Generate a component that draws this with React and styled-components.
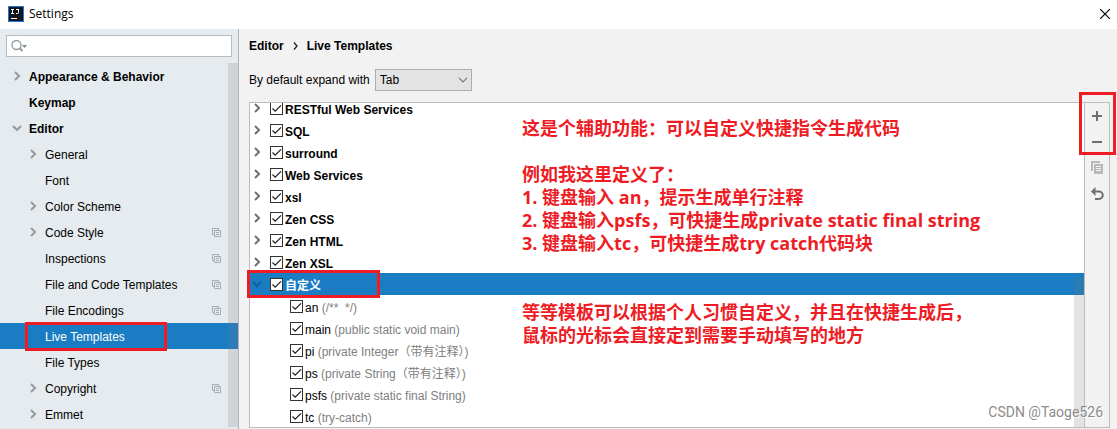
import React, { useState } from 'react';
import styled, { createGlobalStyle } from 'styled-components';

const settingsTree = [
  { name: 'Appearance & Behavior', depth: 0, arrow: 'closed' },
  { name: 'Keymap', depth: 0 },
  { name: 'Editor', depth: 0, arrow: 'open' },
  { name: 'General', depth: 1, arrow: 'closed' },
  { name: 'Font', depth: 1 },
  { name: 'Color Scheme', depth: 1, arrow: 'closed' },
  { name: 'Code Style', depth: 1, arrow: 'closed', perProject: true },
  { name: 'Inspections', depth: 1, perProject: true },
  { name: 'File and Code Templates', depth: 1, perProject: true },
  { name: 'File Encodings', depth: 1, perProject: true },
  { name: 'Live Templates', depth: 1, marked: true },
  { name: 'File Types', depth: 1 },
  { name: 'Copyright', depth: 1, arrow: 'closed', perProject: true },
  { name: 'Emmet', depth: 1, arrow: 'closed' },
];

const templateRows = [
  { name: 'RESTful Web Services', group: true },
  { name: 'SQL', group: true },
  { name: 'surround', group: true },
  { name: 'Web Services', group: true },
  { name: 'xsl', group: true },
  { name: 'Zen CSS', group: true },
  { name: 'Zen HTML', group: true },
  { name: 'Zen XSL', group: true },
  { name: '自定义', group: true, open: true },
  { name: 'an', description: '(/**  */)' },
  { name: 'main', description: '(public static void main)' },
  { name: 'pi', description: '(private Integer（带有注释）)' },
  { name: 'ps', description: '(private String（带有注释）)' },
  { name: 'psfs', description: '(private static final String)' },
  { name: 'tc', description: '(try-catch)' },
];

function Arrow({ open, color }) {
  return (
    <svg width='10' height='10' viewBox='0 0 10 10' fill='none' stroke={color} strokeWidth='2'>
      <path d={open ? 'M1 3l4 4 4-4' : 'M3 1l4 4-4 4'} />
    </svg>
  );
}

function LogoIcon() {
  return (
    <svg width='16' height='16' viewBox='0 0 16 16' aria-hidden='true'>
      <rect width='16' height='16' fill='#1a78e0' />
      <rect x='1' y='1' width='14' height='14' fill='#10151c' />
      <g stroke='#fff' fill='none'>
        <path d='M3 3.500h3M4.500 3v5M3 7.500h3M8 3.500h3M10.500 3v3.500q0 1-1 1H8' />
        <path d='M3 12.500h6' />
      </g>
    </svg>
  );
}

function SearchIcon() {
  return (
    <svg width='18' height='14' viewBox='0 0 18 14' fill='none' aria-hidden='true'>
      <circle cx='5.500' cy='6' r='4.500' stroke='#919ba2' strokeWidth='1.300' />
      <path d='M8.500 9l3 3' stroke='#919ba2' strokeWidth='2' />
      <path d='M11 6h5l-2.500 3z' fill='#7f898f' />
    </svg>
  );
}

function ProjectIcon() {
  return (
    <svg width='9' height='9' viewBox='0 0 9 9' fill='none' stroke='#a3adb5' aria-hidden='true'>
      <path d='M2 6.500H.5v-6h6V2' />
      <path d='M2.500 2.500h6v6h-6zM4 4.500h3M4 6.500h3' />
    </svg>
  );
}

function Checkbox({ id, checked, onChange }) {
  return (
    <CheckWrap>
      <CheckInput id={id} type='checkbox' checked={checked} onChange={onChange} />
      {checked && (
        <CheckMark viewBox='0 0 13 13' fill='none' stroke='#222' strokeWidth='1.300'>
          <path d='M2.500 6.500l2.700 2.700L11 3.400' />
        </CheckMark>
      )}
    </CheckWrap>
  );
}

export default function App() {
  const [selected, setSelected] = useState('Live Templates');
  const [disabled, setDisabled] = useState([]);
  const [expandKey, setExpandKey] = useState('Tab');

  const toggle = (name) => {
    setDisabled((prev) =>
      prev.includes(name) ? prev.filter((item) => item !== name) : [...prev, name]
    );
  };

  return (
    <>
      <GlobalStyle />
      <Window>
        <TitleBar>
          <LogoIcon />
          <Title>Settings</Title>
          <CloseButton type='button' aria-label='Close'>
            <svg width='10' height='10' viewBox='0 0 10 10' stroke='#000' strokeWidth='1.200'>
              <path d='M0 0l10 10M10 0L0 10' />
            </svg>
          </CloseButton>
        </TitleBar>
        <Body>
          <Sidebar>
            <SearchBox>
              <SearchIcon />
              <SearchInput type='text' aria-label='Search settings' />
            </SearchBox>
            <Tree>
              {settingsTree.map((item) => (
                <TreeRow key={item.name}>
                  <TreeButton
                    type='button'
                    $depth={item.depth}
                    $selected={selected === item.name}
                    onClick={() => setSelected(item.name)}
                  >
                    <ArrowSlot>
                      {item.arrow && <Arrow open={item.arrow === 'open'} color='#949a9e' />}
                    </ArrowSlot>
                    <TreeName>{item.name}</TreeName>
                    {item.perProject && <ProjectIcon />}
                  </TreeButton>
                  {item.marked && <TreeMark />}
                </TreeRow>
              ))}
              <TreeScroll />
            </Tree>
          </Sidebar>
          <Main>
            <Breadcrumb>
              <span>Editor</span>
              <svg width='5' height='8' viewBox='0 0 5 8' fill='none' stroke='#222' strokeWidth='1.300'>
                <path d='M1 .5L4 4 1 7.500' />
              </svg>
              <span>Live Templates</span>
            </Breadcrumb>
            <ExpandRow>
              <label htmlFor='expand'>By default expand with</label>
              <SelectWrap>
                <Select
                  id='expand'
                  value={expandKey}
                  onChange={(e) => setExpandKey(e.target.value)}
                >
                  <option>Tab</option>
                  <option>Enter</option>
                  <option>Space</option>
                </Select>
                <SelectArrow viewBox='0 0 10 6' fill='none' stroke='#777' strokeWidth='1.200'>
                  <path d='M1 .8l4 4 4-4' />
                </SelectArrow>
              </SelectWrap>
            </ExpandRow>
            <Panel>
              <TemplateArea>
                <TemplateList>
                  {templateRows.map((row) => (
                    <TemplateRow key={row.name} $group={row.group} $selected={row.open}>
                      {row.group && (
                        <TemplateArrow>
                          <Arrow open={row.open} color={row.open ? '#155d92' : '#707070'} />
                        </TemplateArrow>
                      )}
                      <Checkbox
                        id={`template-${row.name}`}
                        checked={!disabled.includes(row.name)}
                        onChange={() => toggle(row.name)}
                      />
                      <TemplateLabel htmlFor={`template-${row.name}`}>
                        {row.name}
                        {row.description && <Description> {row.description}</Description>}
                      </TemplateLabel>
                    </TemplateRow>
                  ))}
                </TemplateList>
                <ListScroll />
              </TemplateArea>
              <Actions>
                <ActionButton type='button' aria-label='Add'>
                  <svg width='14' height='14' viewBox='0 0 14 14' stroke='#6e6e6e' strokeWidth='2'>
                    <path d='M2 7h10M7 2v10' />
                  </svg>
                </ActionButton>
                <ActionButton type='button' aria-label='Remove'>
                  <svg width='14' height='14' viewBox='0 0 14 14' stroke='#6e6e6e' strokeWidth='2'>
                    <path d='M2 7h10' />
                  </svg>
                </ActionButton>
                <ActionButton type='button' aria-label='Duplicate'>
                  <svg width='14' height='14' viewBox='0 0 14 14' fill='none'>
                    <path d='M2 10V1h8' stroke='#b8b8b8' strokeWidth='2' />
                    <path d='M4 3h9v10H4z' fill='#b8b8b8' />
                    <path d='M6 5.500h5M6 7.500h5M6 9.500h5' stroke='#f2f2f2' />
                  </svg>
                </ActionButton>
                <ActionButton type='button' aria-label='Restore'>
                  <svg width='14' height='14' viewBox='0 0 14 14' fill='none'>
                    <path d='M4 4.500h5a3.500 3.500 0 0 1 0 7.500H5' stroke='#6e6e6e' strokeWidth='2' />
                    <path d='M5.500 0v9L1 4.500z' fill='#6e6e6e' />
                  </svg>
                </ActionButton>
                <ActionsMark />
              </Actions>
              <GroupMark />
              <Notes>
                <p>这是个辅助功能：可以自定义快捷指令生成代码</p>
                <p>
                  例如我这里定义了：
                  <br />
                  1. 键盘输入 an，提示生成单行注释
                  <br />
                  2. 键盘输入psfs，可快捷生成private static final string
                  <br />
                  3. 键盘输入tc，可快捷生成try catch代码块
                </p>
                <p>
                  等等模板可以根据个人习惯自定义，并且在快捷生成后，
                  <br />
                  鼠标的光标会直接定到需要手动填写的地方
                </p>
              </Notes>
            </Panel>
          </Main>
        </Body>
        <Watermark>CSDN @Taoge526</Watermark>
      </Window>
    </>
  );
}

const GlobalStyle = createGlobalStyle`
  * {
    box-sizing: border-box;
  }
  body {
    margin: 0;
    color: #000;
    font-family: 'Liberation Sans', 'Noto Sans CJK SC', sans-serif;
    font-size: 12px;
  }
  button, input, select {
    margin: 0;
    padding: 0;
    border: none;
    background: none;
    color: inherit;
    font: inherit;
  }
  ul, p {
    margin: 0;
    padding: 0;
    list-style: none;
  }
  svg {
    display: block;
    flex: none;
  }
`;

const Window = styled.div`
  position: relative;
  display: flex;
  flex-direction: column;
  min-height: 100vh;
  background-color: #f2f2f2;
`;

const TitleBar = styled.header`
  display: flex;
  align-items: center;
  gap: 5px;
  height: 29px;
  padding: 0 7px 2px 8px;
  background-color: #fff;
`;

const Title = styled.h1`
  flex: 1;
  margin: 0;
  font-family: 'Open Sans', sans-serif;
  font-size: 12px;
  font-weight: 400;
`;

const CloseButton = styled.button`
  display: flex;
`;

const Body = styled.div`
  flex: 1;
  display: flex;
`;

const Sidebar = styled.aside`
  flex: none;
  width: 239px;
  border-right: 1px solid #b4b4b6;
  background-color: #e6ebef;
`;

const SearchBox = styled.div`
  display: flex;
  align-items: center;
  height: 22px;
  margin: 6px;
  padding-left: 4px;
  border: 1px solid #b9bbbd;
  background-color: #fff;
`;

const SearchInput = styled.input`
  flex: 1;
  min-width: 0;
  outline: none;
`;

const Tree = styled.ul`
  position: relative;
`;

const TreeRow = styled.li`
  position: relative;
`;

const TreeButton = styled.button`
  display: flex;
  align-items: center;
  gap: 4px;
  width: 100%;
  height: 26px;
  padding-left: ${({ $depth }) => 9 + $depth * 16}px;
  padding-right: 17px;
  background-color: ${({ $selected }) => ($selected ? '#1a7dc4' : 'transparent')};
  color: ${({ $selected }) => ($selected ? '#fff' : '#000')};
  font-weight: ${({ $depth }) => ($depth === 0 ? 700 : 400)};
  text-align: left;
`;

const ArrowSlot = styled.span`
  display: flex;
  justify-content: center;
  width: 16px;
`;

const TreeName = styled.span`
  flex: 1;
  padding-top: 2px;
`;

const TreeMark = styled.span`
  position: absolute;
  top: -1px;
  left: 25px;
  width: 142px;
  height: 29px;
  border: 3px solid #ee1c25;
  pointer-events: none;
`;

const TreeScroll = styled.span`
  position: absolute;
  top: 0;
  right: 0;
  bottom: 0;
  width: 10px;
  background-color: rgba(120, 120, 130, 0.2);
`;

const Main = styled.main`
  flex: 1;
  display: flex;
  flex-direction: column;
  min-width: 0;
  padding: 0 7px 1px 10px;
`;

const Breadcrumb = styled.nav`
  display: flex;
  align-items: center;
  gap: 9px;
  height: 34px;
  font-weight: 700;
`;

const ExpandRow = styled.div`
  display: flex;
  align-items: center;
  gap: 5px;
  margin: 6px 0 11px;
`;

const SelectWrap = styled.span`
  position: relative;
`;

const Select = styled.select`
  display: block;
  width: 97px;
  height: 22px;
  padding-left: 4px;
  border: 1px solid #adadad;
  background-color: #e3e3e3;
  appearance: none;
`;

const SelectArrow = styled.svg`
  position: absolute;
  top: 8px;
  right: 4px;
  width: 10px;
  height: 6px;
  pointer-events: none;
`;

const Panel = styled.section`
  position: relative;
  flex: 1;
  display: flex;
  border: 1px solid #bcbcbc;
`;

const TemplateArea = styled.div`
  position: relative;
  flex: 1;
  min-width: 0;
  overflow: hidden;
  background-color: #fff;
`;

const TemplateList = styled.ul`
  margin-top: -6px;
`;

const TemplateRow = styled.li`
  display: flex;
  align-items: center;
  gap: 2px;
  height: 22px;
  padding-left: ${({ $group }) => ($group ? 2 : 40)}px;
  background-color: ${({ $selected }) => ($selected ? '#1a7dc4' : 'transparent')};
  color: ${({ $selected }) => ($selected ? '#fff' : '#000')};
  font-weight: ${({ $group }) => ($group ? 700 : 400)};
`;

const TemplateArrow = styled.span`
  width: 16px;
`;

const CheckWrap = styled.span`
  position: relative;
  flex: none;
  width: 13px;
  height: 13px;
`;

const CheckInput = styled.input`
  display: block;
  width: 13px;
  height: 13px;
  border: 1px solid #333;
  background-color: #fff;
  appearance: none;
`;

const CheckMark = styled.svg`
  position: absolute;
  inset: 0;
  width: 13px;
  height: 13px;
  pointer-events: none;
`;

const TemplateLabel = styled.label`
  padding-top: 4px;
  line-height: 16px;
  white-space: pre;
`;

const Description = styled.span`
  color: #808080;
`;

const ListScroll = styled.span`
  position: absolute;
  top: 175px;
  right: 0;
  bottom: 0;
  width: 10px;
  background-color: rgba(115, 115, 115, 0.2);
`;

const Actions = styled.div`
  position: relative;
  display: flex;
  flex-direction: column;
  width: 25px;
  border-left: 1px solid #bcbcbc;
`;

const ActionButton = styled.button`
  display: flex;
  align-items: center;
  justify-content: center;
  height: 26px;
`;

const ActionsMark = styled.span`
  position: absolute;
  top: -11px;
  left: -6px;
  width: 37px;
  height: 63px;
  border: 3px solid #ee1c25;
  pointer-events: none;
`;

const GroupMark = styled.span`
  position: absolute;
  top: 167px;
  left: -3px;
  width: 133px;
  height: 28px;
  border: 3px solid #ee1c25;
  pointer-events: none;
`;

const Notes = styled.div`
  position: absolute;
  top: 14px;
  left: 272px;
  color: #ee1c25;
  font-family: 'Open Sans', 'Noto Sans CJK SC', sans-serif;
  font-size: 18px;
  font-weight: 700;
  line-height: 23px;
  white-space: nowrap;
  pointer-events: none;

  p + p {
    margin-top: 23px;
  }
  p:last-child {
    margin-top: 46px;
  }
`;

const Watermark = styled.span`
  position: absolute;
  right: 14px;
  bottom: 8px;
  color: #8c8c8c;
  font-family: Roboto, sans-serif;
  font-size: 14px;
  line-height: 18px;
  text-shadow: 1px 1px 0 #fff;
`;
